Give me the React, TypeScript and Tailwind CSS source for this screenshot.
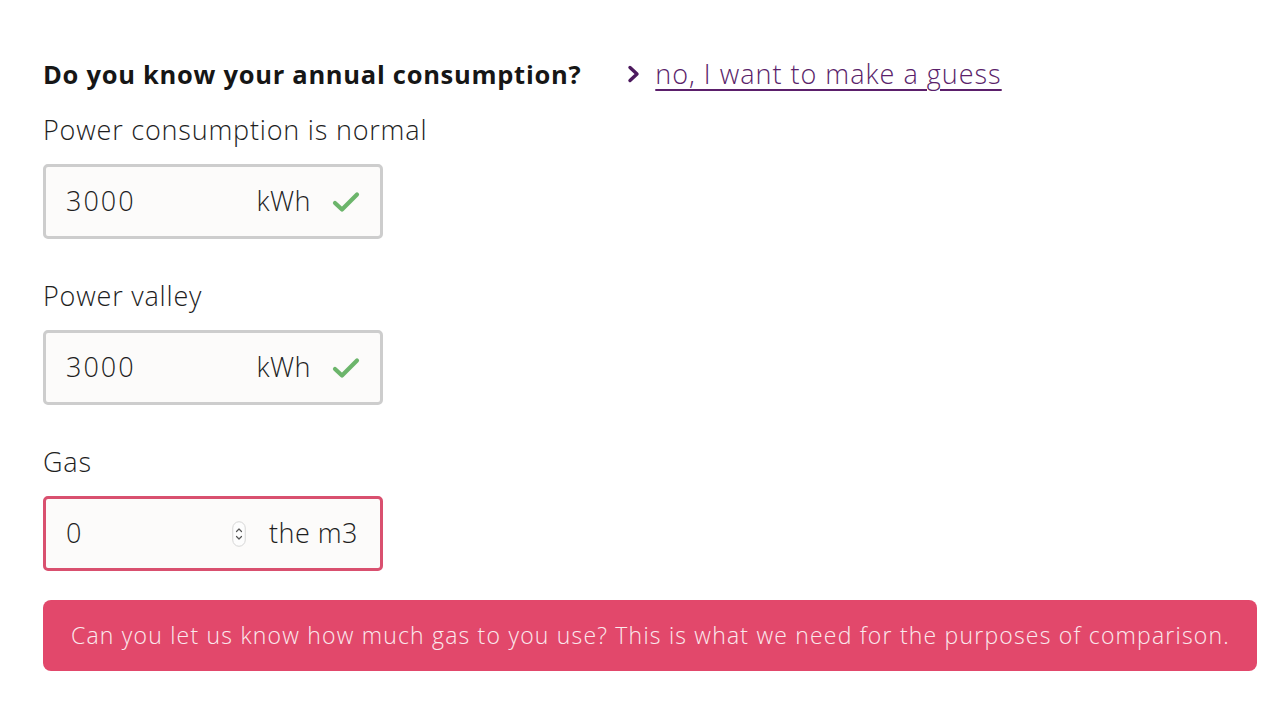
import React from 'react';

const font = { fontFamily: '"Open Sans", "Noto Sans", sans-serif' };

function Check() {
  return (
    <svg className="w-[28px] h-[22px]" viewBox="0 0 28 22" fill="none">
      <path d="M3 12l7 6.5L25 3.5" stroke="#6cb56b" strokeWidth={4.2} strokeLinecap="round" strokeLinejoin="round" />
    </svg>
  );
}

function Spinner() {
  return (
    <svg className="w-[14px] h-[26px]" viewBox="0 0 14 26" fill="none">
      <rect x="0.75" y="0.75" width="12.5" height="24.5" rx="6.25" stroke="#d6d6d6" strokeWidth={1} fill="#fdfdfd" />
      <path d="M4.5 10.5L7 8l2.5 2.5" stroke="#555" strokeWidth={1.2} strokeLinecap="round" strokeLinejoin="round" />
      <path d="M4.5 15.5L7 18l2.5-2.5" stroke="#555" strokeWidth={1.2} strokeLinecap="round" strokeLinejoin="round" />
    </svg>
  );
}

function UnitField({ value, unit }: { value: string; unit: string }) {
  return (
    <div className="mt-[18px] w-[340px] h-[75px] flex items-center rounded-[5px] border-[3px] border-[#cdcdcd] bg-[#fcfbfa] pl-[20px] pr-[20px]">
      <span className="flex-1 text-[27px] font-light tracking-[2px] text-[#1e1e1e]">{value}</span>
      <span className="text-[27px] font-light tracking-[0.5px] text-[#1e1e1e]">{unit}</span>
      <span className="ml-[21px] flex items-center"><Check /></span>
    </div>
  );
}

export default function App() {
  return (
    <div className="min-h-[721px] bg-white pl-[43px] pt-[58px]" style={font}>
      <div className="flex items-center h-[32px]">
        <h2 className="text-[25.5px] font-bold tracking-[0.72px] text-[#161616] leading-[32px]">Do you know your annual consumption?</h2>
        <a href="#" className="ml-[46px] flex items-center text-[#5b1f6b]">
          <svg className="w-[14px] h-[18px] mr-[14px]" viewBox="0 0 14 18" fill="none">
            <path d="M3 2.5l7 6.5-7 6.5" stroke="#4d1a5e" strokeWidth={3.4} strokeLinecap="round" strokeLinejoin="round" />
          </svg>
          <span className="text-[27px] font-light tracking-[1px] underline underline-offset-[5px] decoration-[1.5px] leading-[32px]">no, I want to make a guess</span>
        </a>
      </div>

      <div className="mt-[24px] text-[27px] font-light tracking-[0.8px] text-[#1e1e1e] leading-[32px]">Power consumption is normal</div>
      <UnitField value="3000" unit="kWh" />

      <div className="mt-[41px] text-[27px] font-light tracking-[0.8px] text-[#1e1e1e] leading-[32px]">Power valley</div>
      <UnitField value="3000" unit="kWh" />

      <div className="mt-[41px] text-[27px] font-light tracking-[0.8px] text-[#1e1e1e] leading-[32px]">Gas</div>
      <div className="mt-[18px] w-[340px] h-[75px] flex items-center rounded-[5px] border-[3px] border-[#d9506f] bg-[#fcfbfa] pl-[20px] pr-[22px]">
        <span className="flex-1 text-[27px] font-light text-[#1e1e1e]">0</span>
        <span className="mr-[23px] flex items-center"><Spinner /></span>
        <span className="text-[27px] font-light tracking-[0.5px] text-[#1e1e1e]">the m3</span>
      </div>

      <div className="mt-[29px] mr-[23px] h-[71px] flex items-center rounded-[8px] bg-[#e2486b] pl-[28px]">
        <span className="text-[23px] font-light tracking-[1.2px] text-[#fbe9ed]">Can you let us know how much gas to you use? This is what we need for the purposes of comparison.</span>
      </div>
    </div>
  );
}
